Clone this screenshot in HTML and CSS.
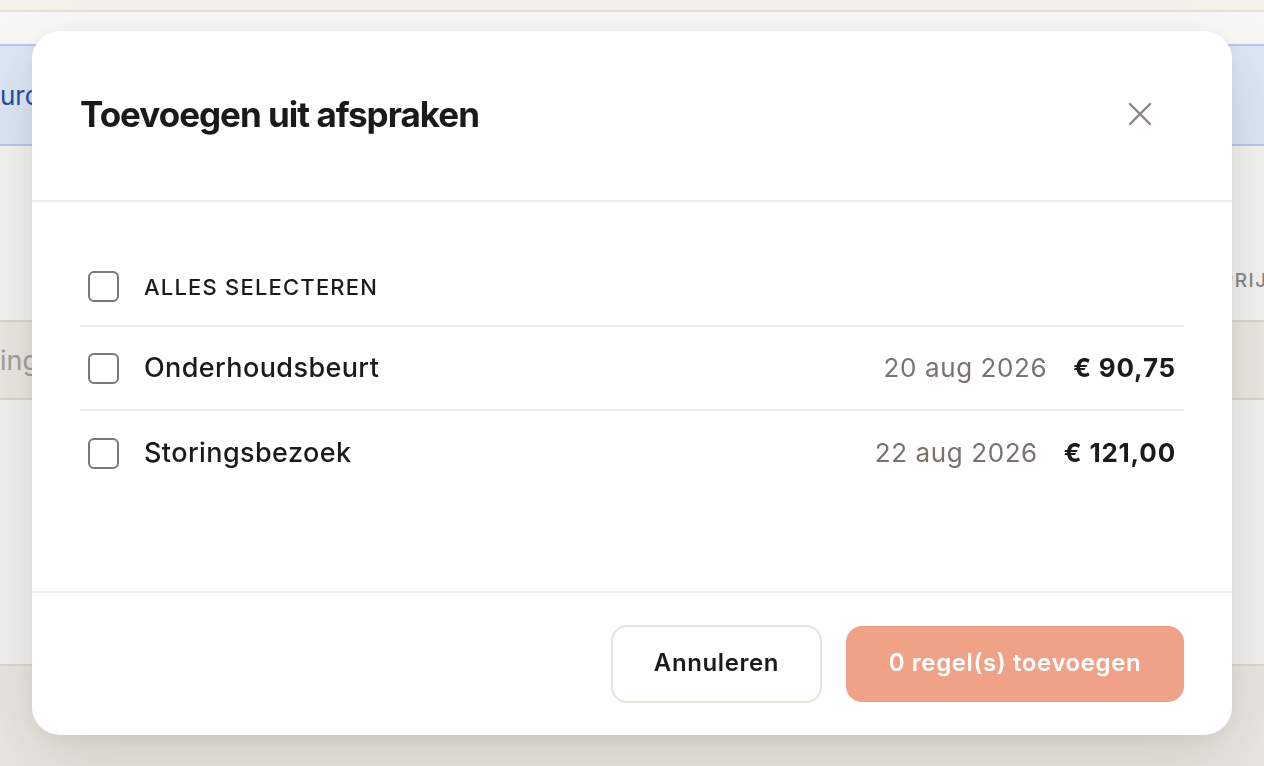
FILE: index.html
```html
<!DOCTYPE html>
<html>
    <head>
        <title>Toevoegen uit afspraken</title>
        <link rel="stylesheet" href="styles.css">
    </head>
    <body>
        <div class="page">
            <div class="topbar"></div>
            <div class="strip"></div>
            <div class="banner">urcalculatie ingeschakeld voor deze offerte</div>
            <div class="tableHead"><span class="headCell">PRIJS</span></div>
            <div class="inputRow">ingevoerde regel</div>
            <div class="tableBody"></div>
            <div class="pageFoot"></div>
        </div>

        <div class="overlay">
            <div class="modal">
                <div class="modalHead">
                    <h2 class="modalTitle">Toevoegen uit afspraken</h2>
                    <button class="close" aria-label="Sluiten">
                        <svg width="24" height="24" viewBox="0 0 24 24" fill="none" stroke="#8b857f" stroke-width="2.4" stroke-linecap="round">
                            <path d="M2 2L22 22M22 2L2 22"/>
                        </svg>
                    </button>
                </div>
                <div class="modalBody">
                    <div class="row rowAll">
                        <span class="check"></span>
                        <span class="label labelAll">ALLES SELECTEREN</span>
                    </div>
                    <div class="row">
                        <span class="check"></span>
                        <span class="label">Onderhoudsbeurt</span>
                        <span class="date">20 aug 2026</span>
                        <span class="price">€ 90,75</span>
                    </div>
                    <div class="row rowLast">
                        <span class="check"></span>
                        <span class="label">Storingsbezoek</span>
                        <span class="date">22 aug 2026</span>
                        <span class="price">€ 121,00</span>
                    </div>
                </div>
                <div class="modalFoot">
                    <button class="btn btnCancel">Annuleren</button>
                    <button class="btn btnAdd">0 regel(s) toevoegen</button>
                </div>
            </div>
        </div>
    </body>
</html>
```

FILE: styles.css
```css
*{
    margin: 0;
    padding: 0;
    box-sizing: border-box;
}
body{
    font-family: Inter, "Noto Sans", sans-serif;
    color: #1c1b1a;
    background: #f3f3f3;
    overflow: hidden;
    height: 766px;
}
.page{
    display: flex;
    flex-direction: column;
    height: 766px;
}
.topbar{
    height: 12px;
    background: #f5f2ec;
    border-bottom: 2px solid #e6e0d5;
}
.strip{
    height: 32px;
    background: #f8f8f8;
}
.banner{
    height: 102px;
    background: #dde7f7;
    border-top: 2px solid #b9cae7;
    border-bottom: 2px solid #b9cae7;
    color: #1d4e9e;
    font-size: 26px;
    display: flex;
    align-items: center;
    white-space: nowrap;
}
.tableHead{
    height: 174px;
    display: flex;
    justify-content: flex-end;
    align-items: center;
    padding-top: 94px;
}
.headCell{
    color: #868686;
    font-size: 19px;
    font-weight: 500;
    letter-spacing: 1.5px;
    width: 43px;
    overflow: hidden;
    white-space: nowrap;
}
.inputRow{
    height: 80px;
    background: #ebe8e3;
    border-top: 2px solid #dbd5cb;
    border-bottom: 2px solid #dbd5cb;
    color: #a39d96;
    font-size: 27px;
    display: flex;
    align-items: center;
    white-space: nowrap;
}
.tableBody{
    height: 266px;
    background: #f2f2f2;
    border-bottom: 2px solid #dcd8d0;
}
.pageFoot{
    flex: 1;
    background: #e9e7e2;
}
.overlay{
    position: fixed;
    top: 0;
    left: 0;
    right: 0;
    bottom: 0;
    display: flex;
    justify-content: center;
    align-items: center;
}
.modal{
    width: 1200px;
    height: 704px;
    background: #fff;
    border-radius: 28px;
    display: flex;
    flex-direction: column;
    box-shadow: 0 24px 70px rgba(70, 60, 40, 0.16), 0 4px 16px rgba(70, 60, 40, 0.06);
}
.modalHead{
    height: 171px;
    padding: 0 80px 4px 48px;
    display: flex;
    justify-content: space-between;
    align-items: center;
    border-bottom: 2px solid #f0ece7;
}
.modalTitle{
    font-size: 35px;
    font-weight: 700;
    letter-spacing: -1px;
    color: #1a1a1a;
}
.close{
    width: 24px;
    height: 48px;
    border: none;
    background: none;
    display: flex;
    justify-content: center;
    align-items: center;
}
.modalBody{
    padding: 46px 48px 0;
    height: 389px;
}
.row{
    height: 84px;
    padding: 0 8px;
    display: flex;
    align-items: center;
    border-bottom: 2px solid #f0ece7;
}
.rowAll{
    height: 79px;
}
.rowLast{
    border-bottom: none;
}
.check{
    width: 31px;
    height: 31px;
    border: 2px solid #7b7774;
    border-radius: 6px;
    flex-shrink: 0;
}
.label{
    margin-left: 25px;
    font-size: 27px;
    font-weight: 500;
    letter-spacing: 0.4px;
    flex: 1;
    margin-top: -2px;
}
.labelAll{
    font-size: 22px;
    letter-spacing: 1.2px;
    margin-top: 0;
}
.date{
    color: #79736e;
    font-size: 26px;
    letter-spacing: 0.6px;
    margin-top: -2px;
}
.price{
    margin-left: 26px;
    font-size: 26px;
    font-weight: 700;
    letter-spacing: 0.8px;
    margin-top: -2px;
}
.modalFoot{
    flex: 1;
    border-top: 2px solid #f0ece7;
    padding: 0 48px;
    display: flex;
    justify-content: flex-end;
    align-items: center;
    gap: 24px;
}
.btn{
    font-family: Inter, "Noto Sans", sans-serif;
    font-size: 24px;
    font-weight: 600;
    letter-spacing: 0.6px;
    border-radius: 16px;
    padding-bottom: 3px;
}
.btnCancel{
    width: 211px;
    height: 78px;
    background: #fff;
    border: 2px solid #e8e3da;
    color: #1c1b1a;
}
.btnAdd{
    width: 338px;
    height: 76px;
    background: #f0a288;
    border: none;
    color: #fff;
}
```
